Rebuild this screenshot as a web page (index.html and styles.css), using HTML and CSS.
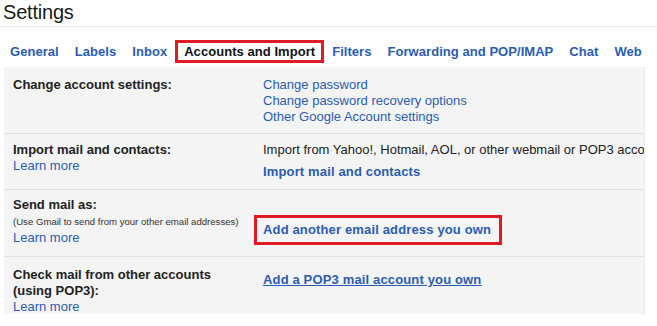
FILE: index.html
```html
<!DOCTYPE html>
<html>
<head>
<meta charset="utf-8">
<link rel="stylesheet" href="styles.css">
</head>
<body>
<div class="title">Settings</div>
<nav class="tabs">
  <a class="tab">General</a>
  <a class="tab">Labels</a>
  <a class="tab">Inbox</a>
  <a class="tab active">Accounts and Import</a>
  <a class="tab">Filters</a>
  <a class="tab">Forwarding and POP/IMAP</a>
  <a class="tab">Chat</a>
  <a class="tab">Web</a>
</nav>
<div class="panel">
  <div class="row first">
    <div class="label">
      <div class="strong">Change account settings:</div>
    </div>
    <div class="value">
      <a class="link">Change password</a>
      <a class="link">Change password recovery options</a>
      <a class="link">Other Google Account settings</a>
    </div>
  </div>
  <div class="row">
    <div class="label">
      <div class="strong">Import mail and contacts:</div>
      <a class="link">Learn more</a>
    </div>
    <div class="value">
      <div class="plain">Import from Yahoo!, Hotmail, AOL, or other webmail or POP3 accounts.</div>
      <a class="link bold spaced">Import mail and contacts</a>
    </div>
  </div>
  <div class="row third">
    <div class="label">
      <div class="strong">Send mail as:</div>
      <div class="small">(Use Gmail to send from your other email addresses)</div>
      <a class="link">Learn more</a>
    </div>
    <div class="value">
      <a class="link bold boxed">Add another email address you own</a>
    </div>
  </div>
  <div class="row last">
    <div class="label">
      <div class="strong">Check mail from other accounts<br>(using POP3):</div>
      <a class="link tail">Learn more</a>
    </div>
    <div class="value">
      <a class="link bold underline pop">Add a POP3 mail account you own</a>
    </div>
  </div>
</div>
</body>
</html>
```

FILE: styles.css
```css
html, body {
  margin: 0;
  padding: 0;
  background: #ffffff;
  font-family: "Liberation Sans", Arial, sans-serif;
  font-size: 13px;
  color: #222222;
  overflow: hidden;
}

.title {
  font-size: 20px;
  line-height: 24px;
  padding: 0 0 2px 3px;
  border-bottom: 1px solid #e8e8e8;
  color: #1a1a1a;
  letter-spacing: -0.2px;
}

.tabs {
  display: flex;
  margin-top: 13px;
  padding-left: 2px;
  white-space: nowrap;
  overflow: hidden;
}

.tab {
  font-weight: bold;
  color: #2a5db0;
  line-height: 15px;
  padding: 1px 5px;
  border: 3px solid transparent;
  letter-spacing: 0.05px;
}

.tab.active {
  color: #111111;
  border-color: #dd1c24;
  padding: 1px 6px;
}

.panel {
  margin: 4px 12px 0 4px;
  background: #f4f4f4;
  padding-top: 1px;
  border-right: 1px solid #ececec;
  overflow: hidden;
}

.row {
  display: grid;
  grid-template-columns: 250px 1fr;
  padding: 8px 0 9px 9px;
  border-bottom: 1px solid #e2e2e2;
  line-height: 16px;
}

.row.first {
  padding: 9px 0 8px 9px;
}

.row.third {
  padding: 7px 0 10px 9px;
}

.row.last {
  border-bottom: none;
  padding: 10px 0 0 9px;
}

.strong {
  font-weight: bold;
  color: #222222;
}

.value {
  display: flex;
  flex-direction: column;
  align-items: flex-start;
}

.link {
  display: block;
  color: #2a5db0;
}

.tail {
  line-height: 14px;
  margin-top: 1px;
}

.bold {
  font-weight: bold;
  letter-spacing: 0.15px;
}

.underline {
  text-decoration: underline;
}

.spaced {
  margin-top: 6px;
}

.pop {
  margin-top: 5px;
}

.small {
  font-size: 9.6px;
  line-height: 17px;
  color: #333333;
}

.plain {
  white-space: nowrap;
  color: #222222;
}

.boxed {
  margin: 18px 0 0 -9px;
  padding: 4px 8px 4px 6px;
  border: 3px solid #dd1c24;
}
```
